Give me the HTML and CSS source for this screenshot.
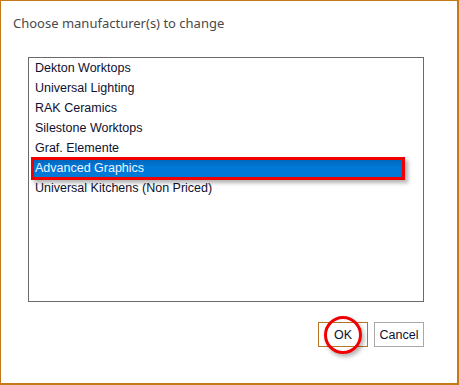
FILE: index.html
```html
<!DOCTYPE html>
<html>
<head>
<meta charset="utf-8">
<link rel="stylesheet" href="styles.css">
</head>
<body>
<div class="dialog">
  <div class="title">Choose manufacturer(s) to change</div>
  <div class="list">
    <div class="item">Dekton Worktops</div>
    <div class="item">Universal Lighting</div>
    <div class="item">RAK Ceramics</div>
    <div class="item">Silestone Worktops</div>
    <div class="item">Graf. Elemente</div>
    <div class="item selected">Advanced Graphics</div>
    <div class="item">Universal Kitchens (Non Priced)</div>
  </div>
  <div class="buttons">
    <button class="btn ok">OK<span class="circle"></span></button>
    <button class="btn">Cancel</button>
  </div>
</div>
</body>
</html>
```
FILE: styles.css
```css
html, body {
  margin: 0;
  padding: 0;
  background: #ffffff;
}
.dialog {
  width: 459px;
  height: 385px;
  box-sizing: border-box;
  border-left: 1px solid #c47b17;
  border-top: 1px solid #c47b17;
  border-right: 2px solid #c47b17;
  border-bottom: 2px solid #c47b17;
  display: flex;
  flex-direction: column;
  background: #fff;
}
.title {
  font-family: "Noto Sans", "Open Sans", sans-serif;
  font-size: 13px;
  color: #4a4a4a;
  line-height: 18px;
  margin: 13px 0 0 12px;
  height: 18px;
}
.list {
  margin: 25px 0 0 27px;
  width: 396px;
  height: 245px;
  box-sizing: border-box;
  border: 1px solid #6a6a6a;
  background: #fff;
  font-family: "Liberation Sans", Arial, sans-serif;
  font-size: 12.5px;
  color: #101030;
}
.item {
  height: 20px;
  line-height: 21px;
  padding-left: 6px;
  white-space: nowrap;
}
.item.selected {
  position: relative;
  margin: 0 18px 0 2px;
  padding-left: 4px;
  color: #eef4ff;
  background: linear-gradient(#0063b5, #0078d7 45%, #0078d7);
}
.item.selected::after {
  content: "";
  position: absolute;
  left: 0;
  right: 0;
  top: -1px;
  bottom: -2px;
  border: 3px solid #f00000;
  box-shadow: 3px 3px 4px rgba(0, 0, 0, 0.3);
}
.buttons {
  display: flex;
  justify-content: flex-end;
  gap: 6px;
  margin: 20px 0 0 0;
  width: 423px;
}
.btn {
  position: relative;
  width: 50px;
  height: 25px;
  box-sizing: border-box;
  background: #fff;
  border: 1px solid #a8a8a8;
  font-family: "Liberation Sans", Arial, sans-serif;
  font-size: 12.5px;
  color: #101030;
  padding: 0;
}
.btn.ok {
  border-color: #b57523;
}
.circle {
  position: absolute;
  left: 5px;
  top: -7px;
  width: 38px;
  height: 38px;
  box-sizing: border-box;
  border: 3px solid #f00000;
  border-radius: 50%;
  box-shadow: 2px 3px 4px rgba(0, 0, 0, 0.3);
}
```
